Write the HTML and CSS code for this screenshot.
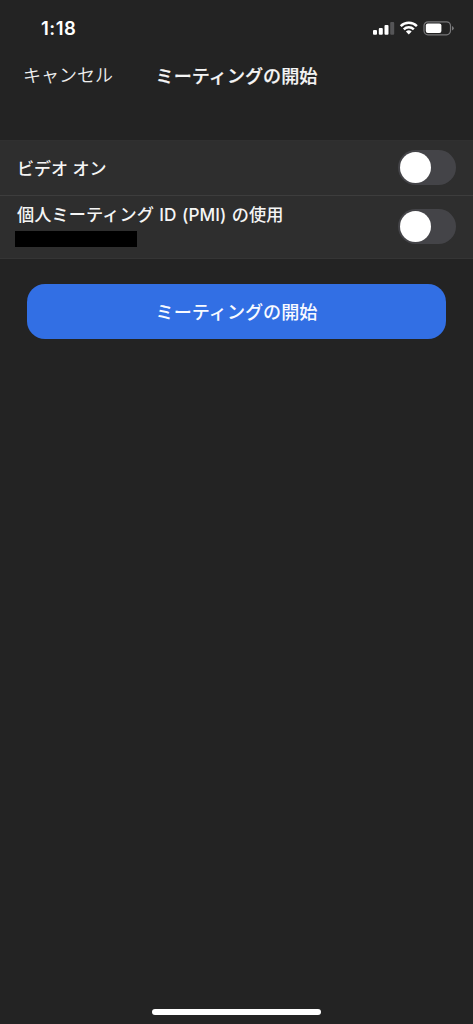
FILE: index.html
```html
<!DOCTYPE html>
<html lang="ja">
<head>
<meta charset="utf-8">
<title>ミーティングの開始</title>
<link rel="stylesheet" href="styles.css">
</head>
<body>
<div class="screen">
  <header class="status">
    <span class="time">1:18</span>
    <svg class="indicators" width="82" height="16" viewBox="0 0 82 16">
      <g fill="#fff">
        <rect x="0" y="10" width="4" height="4.7" rx="1"/>
        <rect x="5.8" y="7.9" width="4" height="6.8" rx="1"/>
        <rect x="11.5" y="5" width="4" height="9.7" rx="1"/>
        <rect x="17.2" y="2" width="4" height="12.7" rx="1" fill="#555557"/>
      </g>
      <g fill="none" stroke="#fff" stroke-width="2.4">
        <path d="M27.7 6.1a11.4 11.4 0 0 1 16.2 0"/>
        <path d="M30.8 9.4a7 7 0 0 1 10 0"/>
      </g>
      <path fill="#fff" d="M32.9 11.6a4.1 4.1 0 0 1 5.8 0l-2.9 3z"/>
      <rect x="51" y="1.8" width="26.5" height="13" rx="4" fill="none" stroke="#78787a" stroke-width="1.2"/>
      <rect x="52.8" y="3.6" width="15.6" height="9.4" rx="2" fill="#fff"/>
      <path d="M79 6q1.8.8 1.8 2.3T79 10.6z" fill="#78787a"/>
    </svg>
  </header>
  <nav class="nav">
    <span class="cancel">キャンセル</span>
    <h1 class="title">ミーティングの開始</h1>
  </nav>
  <main>
    <section class="options">
      <div class="row">
        <span class="label">ビデオ オン</span>
        <span class="switch"><span class="knob"></span></span>
      </div>
      <div class="row row-id">
        <div class="id-block">
          <span class="label label-id">個人ミーティング ID (PMI) の使用</span>
          <div class="redacted"></div>
        </div>
        <span class="switch"><span class="knob"></span></span>
      </div>
    </section>
    <button class="start">ミーティングの開始</button>
  </main>
  <div class="home"></div>
</div>
</body>
</html>
```
FILE: styles.css
```css
* { box-sizing: border-box; }
body { margin: 0; background: #232323; }
.screen {
  display: flex;
  flex-direction: column;
  height: 1024px;
  color: #f5f5f5;
  background: #232323;
  font-family: Inter, "Noto Sans CJK JP", sans-serif;
  font-size: 18px;
}
.status {
  display: flex;
  justify-content: space-between;
  align-items: center;
  height: 56px;
  padding: 0 18px 0 41px;
}
.time { font-size: 18.5px; font-weight: 600; letter-spacing: 0.5px; color: #fff; }
.nav {
  display: grid;
  grid-template-columns: 1fr auto 1fr;
  align-items: center;
  height: 40px;
  padding: 0 23px;
  line-height: 26px;
}
.cancel { font-weight: 350; color: #eee; white-space: nowrap; }
.title { margin: 0; font-size: 18.1px; font-weight: 500; -webkit-text-stroke: 0.2px; }
.options {
  margin-top: 44px;
  background: #2e2e2e;
  border-top: 1px solid #303030;
  border-bottom: 1px solid #353535;
}
.row {
  display: flex;
  justify-content: space-between;
  align-items: center;
  height: 54px;
  padding: 0 17px 1px;
}
.row > .label { padding-top: 2px; }
.row-id { height: 63px; border-top: 1px solid #3d3d3d; }
.label { display: block; font-size: 17px; line-height: 24px; font-weight: 500; white-space: pre; }
.label-id { font-size: 17.2px; letter-spacing: 0.05px; word-spacing: 0.8px; }
.id-block { align-self: flex-start; padding-top: 7px; }
.redacted { width: 122px; height: 16px; margin: 4px 0 0 -2px; background: #000; }
.switch {
  width: 58px;
  height: 35px;
  padding: 2px;
  border-radius: 18px;
  background: #444448;
}
.knob { display: block; width: 31px; height: 31px; border-radius: 50%; background: #fff; }
.start {
  display: block;
  width: 419px;
  height: 55px;
  margin: 25px 0 0 27px;
  padding: 0;
  border: 0;
  border-radius: 18px;
  background: #326fe4;
  color: #f8faff;
  font: 500 18.1px/26px Inter, "Noto Sans CJK JP", sans-serif;
}
.home {
  width: 169px;
  height: 6px;
  margin: auto auto 9px;
  border-radius: 3px;
  background: #fff;
}
```
